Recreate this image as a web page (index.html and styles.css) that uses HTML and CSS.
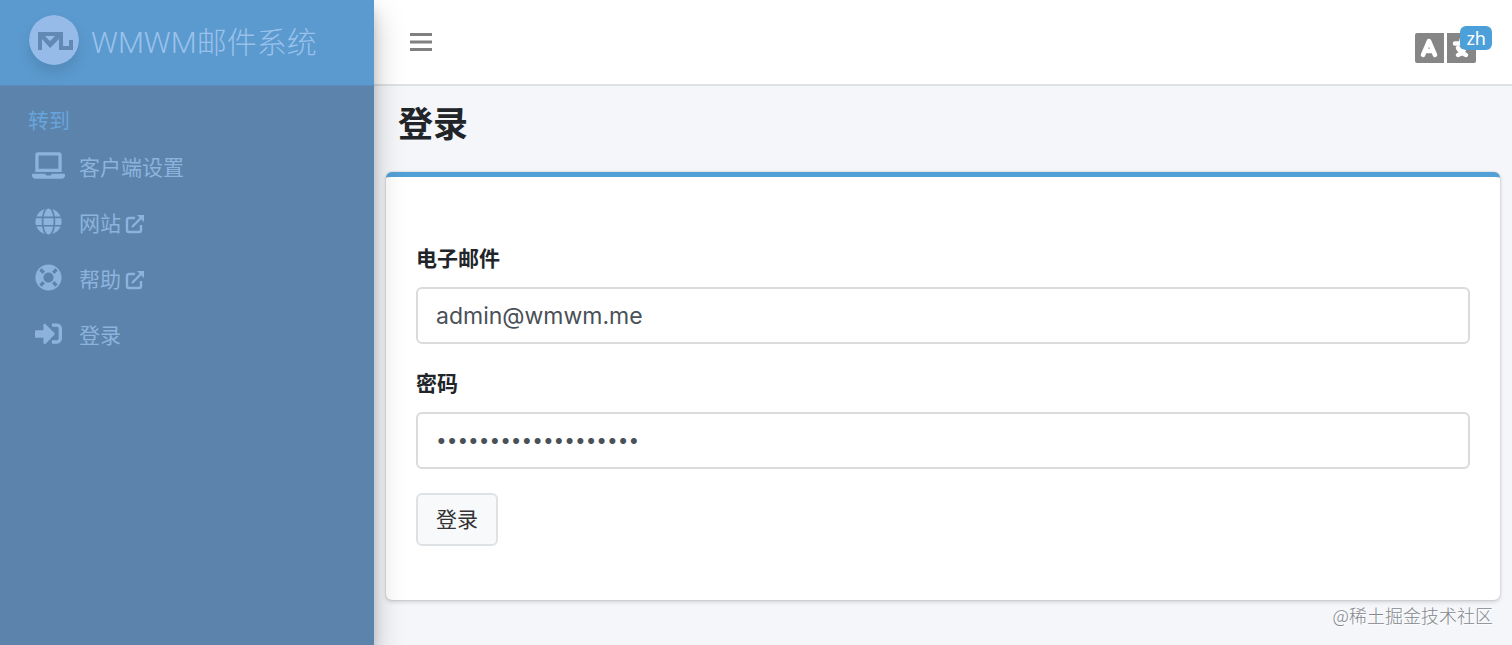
FILE: index.html
```html
<!DOCTYPE html>
<html lang="zh">
<head>
    <meta charset="UTF-8">
    <meta name="viewport" content="width=device-width, initial-scale=1.0">
    <title>登录</title>
    <link rel="stylesheet" href="styles.css">
</head>
<body>
    <aside class="sidebar">
        <a href="#" class="brand">
            <svg class="brand-logo" viewBox="0 0 50 50" aria-hidden="true">
                <circle cx="25" cy="25" r="25" fill="#96bbe8"/>
                <path fill="#6189b4" d="M9 17h25v14h6v-6h4v10H30V24l-9 9-8-9v11H9zM16 21l5 5 5-5z" fill-rule="evenodd"/>
            </svg>
            <span class="brand-text">WMWM邮件系统</span>
        </a>
        <nav class="menu">
            <h6 class="menu-header">转到</h6>
            <a href="#" class="menu-link">
                <svg class="menu-icon" viewBox="0 0 640 512" aria-hidden="true"><path d="M624 416H381.54c-.74 19.81-14.71 32-32.74 32H288c-18.69 0-33.02-17.47-32.77-32H16c-8.8 0-16 7.2-16 16v16c0 35.2 28.8 64 64 64h512c35.2 0 64-28.8 64-64v-16c0-8.8-7.2-16-16-16zM576 48c0-26.4-21.6-48-48-48H112C85.6 0 64 21.6 64 48v336h512V48zm-64 272H128V64h384v256z"/></svg>
                <span>客户端设置</span>
            </a>
            <a href="#" class="menu-link">
                <svg class="menu-icon" viewBox="0 0 496 512" aria-hidden="true"><path d="M336.5 160C322 70.7 287.8 8 248 8s-74 62.7-88.5 152h177zM152 256c0 22.2 1.2 43.5 3.3 64h185.3c2.1-20.5 3.3-41.8 3.3-64s-1.2-43.5-3.3-64H155.3c-2.1 20.5-3.3 41.8-3.3 64zm324.7-96c-28.6-67.9-86.5-120.4-158-141.6 24.4 33.8 41.2 84.7 50 141.6h108zM177.2 18.4C105.8 39.6 47.8 92.1 19.3 160h108c8.7-56.9 25.5-107.8 49.9-141.6zM487.4 192H372.7c2.1 21 3.3 42.5 3.3 64s-1.2 43-3.3 64h114.6c5.5-20.5 8.6-41.8 8.6-64s-3.1-43.5-8.5-64zM120 256c0-21.5 1.2-43 3.3-64H8.6C3.2 212.5 0 233.8 0 256s3.2 43.5 8.6 64h114.6c-2-21-3.2-42.5-3.2-64zm39.5 96c14.5 89.3 48.7 152 88.5 152s74-62.7 88.5-152h-177zm159.3 141.6c71.4-21.2 129.4-73.7 158-141.6h-108c-8.8 56.9-25.6 107.8-50 141.6zM19.3 352c28.6 67.9 86.5 120.4 158 141.6-24.4-33.8-41.2-84.7-50-141.6h-108z"/></svg>
                <span>网站</span>
                <svg class="external-icon" viewBox="0 0 20 20" aria-hidden="true"><path class="external-box" d="M10 4H4Q2 4 2 6v10q0 2 2 2h10q2 0 2-2v-5M7 13L16 4"/><path d="M12 1h7v7z"/></svg>
            </a>
            <a href="#" class="menu-link">
                <svg class="menu-icon" viewBox="0 0 512 512" aria-hidden="true"><path d="M256 8C119.033 8 8 119.033 8 256s111.033 248 248 248 248-111.033 248-248S392.967 8 256 8zm173.696 119.559l-63.399 63.399c-10.987-18.559-26.67-34.252-45.255-45.255l63.399-63.399a218.396 218.396 0 0 1 45.255 45.255zM256 352c-53.019 0-96-42.981-96-96s42.981-96 96-96 96 42.981 96 96-42.981 96-96 96zM127.559 82.304l63.399 63.399c-18.559 10.987-34.252 26.67-45.255 45.255l-63.399-63.399a218.372 218.372 0 0 1 45.255-45.255zM82.304 384.441l63.399-63.399c10.987 18.559 26.67 34.252 45.255 45.255l-63.399 63.399a218.396 218.396 0 0 1-45.255-45.255zm302.137 45.255l-63.399-63.399c18.559-10.987 34.252-26.67 45.255-45.255l63.399 63.399a218.403 218.403 0 0 1-45.255 45.255z"/></svg>
                <span>帮助</span>
                <svg class="external-icon" viewBox="0 0 20 20" aria-hidden="true"><path class="external-box" d="M10 4H4Q2 4 2 6v10q0 2 2 2h10q2 0 2-2v-5M7 13L16 4"/><path d="M12 1h7v7z"/></svg>
            </a>
            <a href="#" class="menu-link">
                <svg class="menu-icon" viewBox="0 0 512 512" aria-hidden="true"><path d="M416 448h-84c-6.6 0-12-5.4-12-12v-40c0-6.6 5.4-12 12-12h84c17.7 0 32-14.3 32-32V160c0-17.7-14.3-32-32-32h-84c-6.6 0-12-5.4-12-12V76c0-6.6 5.4-12 12-12h84c53 0 96 43 96 96v192c0 53-43 96-96 96zm-47-201L201 79c-15-15-41-4.5-41 17v96H24c-13.3 0-24 10.7-24 24v96c0 13.3 10.7 24 24 24h136v96c0 21.5 26 32 41 17l168-168c9.3-9.4 9.3-24.6 0-34z"/></svg>
                <span>登录</span>
            </a>
        </nav>
    </aside>
    <div class="content">
        <header class="navbar">
            <button type="button" class="toggle" aria-label="菜单">
                <svg class="toggle-icon" viewBox="0 0 22 20" aria-hidden="true"><path d="M0 1h22v3H0zM0 8.500h22v3H0zM0 16h22v3H0z"/></svg>
            </button>
            <button type="button" class="language" aria-label="语言">
                <svg class="language-icon" viewBox="0 0 61 30" aria-hidden="true">
                    <path fill="#868686" d="M2 0h27v30H2q-2 0-2-2V2q0-2 2-2zM32 0h27q2 0 2 2v26q0 2-2 2H32z"/>
                    <path class="language-mark" d="M8 22L14 8L20 22M10 18h8M40 10.500h13M46.500 7v3M43 22q5-2 7-8M43 15q3 5 8 7"/>
                </svg>
                <span class="badge">zh</span>
            </button>
        </header>
        <main class="main">
            <h1 class="title">登录</h1>
            <section class="card">
                <form>
                    <label for="email">电子邮件</label>
                    <input type="email" id="email" name="email" value="admin@wmwm.me">
                    <label for="pw">密码</label>
                    <input type="password" id="pw" name="pw" value="wmwmwmwmwmwmwmwmwmw">
                    <button type="submit" class="submit">登录</button>
                </form>
            </section>
        </main>
        <span class="watermark">@稀土掘金技术社区</span>
    </div>
</body>
</html>
```
FILE: styles.css
```css
* {
    box-sizing: border-box;
}
body {
    margin: 0;
    display: flex;
    min-height: 100vh;
    font-family: Inter, "Noto Sans CJK SC", sans-serif;
    font-size: 21px;
    line-height: 32px;
    color: #212529;
    background-color: #f4f6f9;
}
a {
    text-decoration: none;
}
button {
    font-family: inherit;
    cursor: pointer;
}

/* Sidebar */
.sidebar {
    position: relative;
    z-index: 1;
    flex: 0 0 374px;
    font-family: "Noto Sans CJK SC", sans-serif;
    background-color: #5c83ab;
    box-shadow: 0 14px 28px rgba(0,0,0,0.25), 0 10px 10px rgba(0,0,0,0.12);
}
.brand {
    display: flex;
    align-items: center;
    gap: 12px;
    height: 86px;
    padding: 0 29px 5px;
    background-color: #5b9ace;
    border-bottom: 1px solid #5a8dbd;
    color: #9ac1ec;
}
.brand-logo {
    width: 50px;
    height: 50px;
    border-radius: 50%;
    box-shadow: 0 8px 12px rgba(60,90,130,0.25);
}
.brand-text {
    padding-top: 6px;
    font-family: Roboto, "Noto Sans CJK SC", sans-serif;
    font-size: 30px;
    line-height: 40px;
    font-weight: 300;
}
.menu {
    display: flex;
    flex-direction: column;
    padding: 17px 28px;
}
.menu-header {
    margin: 0 0 6px;
    font-size: 21px;
    font-weight: 400;
    color: #68a5dc;
}
.menu-link {
    display: flex;
    align-items: center;
    height: 56px;
    padding-left: 4px;
    padding-bottom: 6px;
    color: #8db3dd;
}
.menu-link:hover {
    color: #fff;
}
.menu-icon {
    width: 33px;
    height: 27px;
    margin-right: 14px;
    margin-bottom: 2px;
    fill: currentColor;
}
.external-icon {
    width: 20px;
    height: 20px;
    margin-top: 3px;
    margin-left: 4px;
    fill: currentColor;
}
.external-box {
    fill: none;
    stroke: currentColor;
    stroke-width: 2.4;
}

/* Content */
.content {
    position: relative;
    flex: 1;
    min-width: 0;
}
.navbar {
    display: flex;
    align-items: center;
    justify-content: space-between;
    height: 86px;
    padding: 0 36px;
    background-color: #fff;
    border-bottom: 2px solid #dee2e6;
}
.toggle,
.language {
    padding: 0;
    border: none;
    background: none;
}
.toggle-icon {
    display: block;
    width: 22px;
    height: 20px;
    fill: #808080;
}
.language {
    position: relative;
    padding-top: 12px;
}
.language-icon {
    display: block;
    width: 61px;
    height: 30px;
}
.language-mark {
    fill: none;
    stroke: #fff;
    stroke-width: 4.5;
    stroke-linecap: round;
    stroke-linejoin: round;
}
.badge {
    position: absolute;
    top: 5px;
    right: -16px;
    padding: 0 6px;
    border-radius: 6px;
    background-color: #4ba0d9;
    color: #fff;
    font-family: "Noto Sans", sans-serif;
    font-size: 18px;
    line-height: 24px;
}
.main {
    padding: 12px;
}
.title {
    margin: 0 12px 22px;
    font-size: 35px;
    line-height: 52px;
    font-weight: 700;
}
.card {
    padding: 66px 30px 54px;
    background-color: #fff;
    border-top: 5px solid #52a1d6;
    border-radius: 6px;
    box-shadow: 0 0 2px rgba(0,0,0,0.2), 0 2px 4px rgba(0,0,0,0.15);
}
label {
    display: block;
    margin-bottom: 12px;
    font-weight: 700;
}
input {
    display: block;
    width: 100%;
    height: 57px;
    margin-bottom: 24px;
    padding: 0 18px;
    border: 2px solid #d9dbdd;
    border-radius: 6px;
    background-color: #fff;
    color: #495057;
    font-family: Inter, sans-serif;
    font-size: 23px;
}
input[type="password"] {
    font-size: 19px;
}
.submit {
    display: block;
    padding: 9px 18px;
    border: 2px solid #dfe2e5;
    border-radius: 6px;
    background-color: #f8f9fa;
    color: #333;
    font-size: 21px;
    line-height: 31px;
}
.watermark {
    position: absolute;
    right: 19px;
    bottom: 17px;
    color: #85878c;
    font-family: "Noto Sans CJK SC", sans-serif;
    font-size: 18px;
    line-height: 26px;
    font-weight: 300;
    text-shadow: 1px 1px 1px #fff;
}
```
